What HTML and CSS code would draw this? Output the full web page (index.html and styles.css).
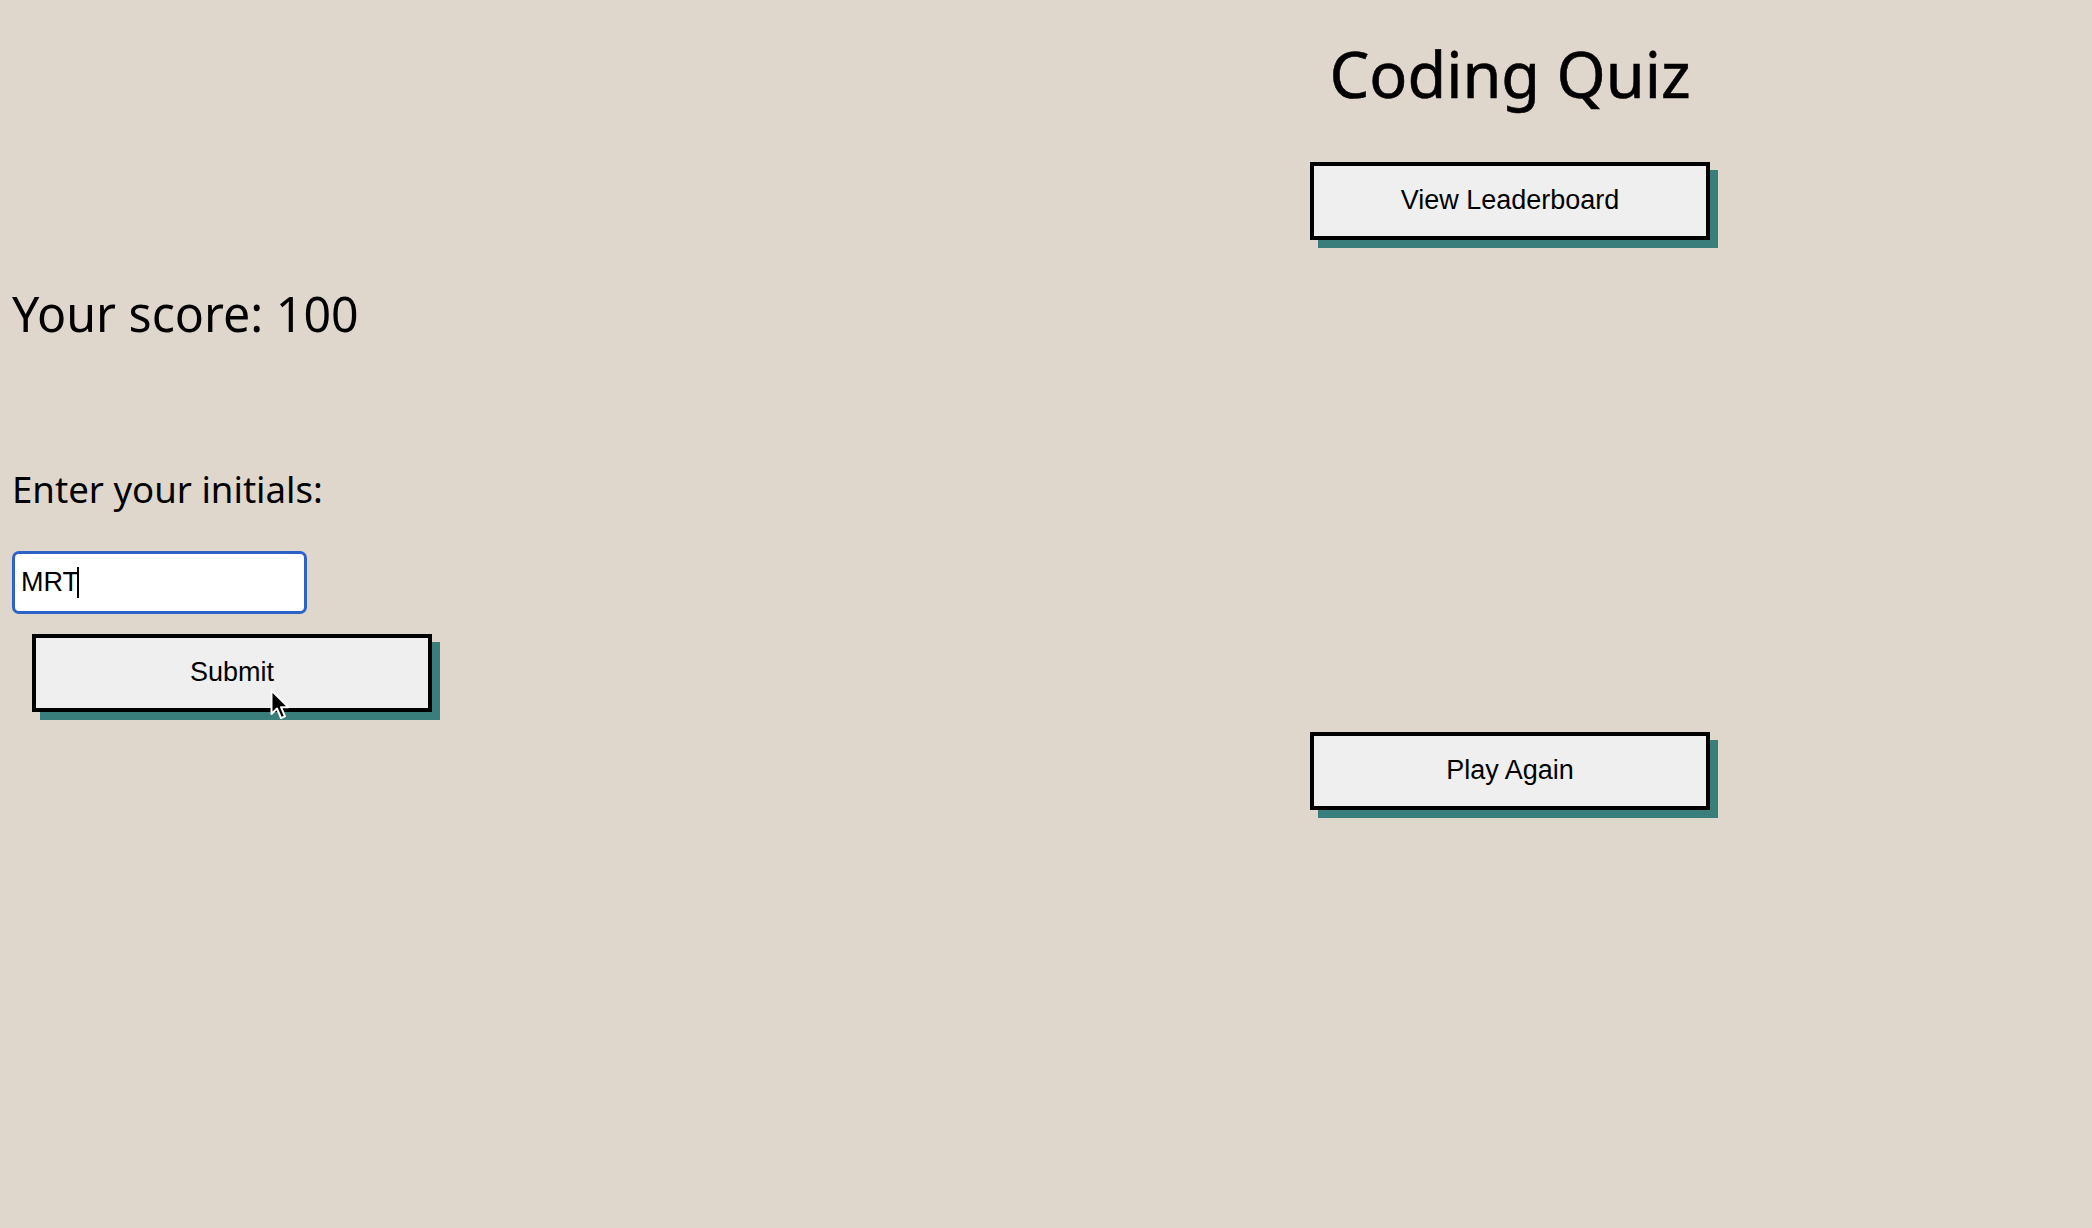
FILE: index.html
```html
<!DOCTYPE html>
<html lang="en">
<head>
<meta charset="utf-8">
<title>Coding Quiz</title>
<link rel="stylesheet" href="styles.css">
</head>
<body>
<div class="page">
  <section class="left">
    <h2 class="score">Your score: 100</h2>
    <label class="label" for="initials">Enter your initials:</label>
    <div class="field">
      <input id="initials" class="input" type="text" value="MRT">
      <span class="caret"></span>
    </div>
    <div class="submit-wrap">
      <button class="btn btn-submit">Submit</button>
      <svg class="cursor" width="22" height="34" viewBox="0 0 22 34">
        <path d="M1.5 1.5 L1.5 25 L7 19.5 L11 29 L15 27.3 L11 18.2 L18.5 18.2 Z" fill="#000" stroke="#fff" stroke-width="2" stroke-linejoin="round"/>
      </svg>
    </div>
  </section>
  <section class="right">
    <h1 class="title">Coding Quiz</h1>
    <button class="btn">View Leaderboard</button>
    <button class="btn btn-play">Play Again</button>
  </section>
</div>
</body>
</html>
```
FILE: styles.css
```css
html, body {
  margin: 0;
  padding: 0;
}
body {
  background: #dfd7cc;
  font-family: "Noto Sans", "Open Sans", sans-serif;
  color: #000;
  width: 2092px;
  height: 1228px;
  overflow: hidden;
}
.page {
  display: flex;
  justify-content: space-between;
  align-items: flex-start;
}
.left {
  display: flex;
  flex-direction: column;
  align-items: flex-start;
  padding-left: 12px;
}
.score {
  font-size: 48.3px;
  font-weight: 400;
  line-height: 67px;
  margin: 280px 0 0 0;
}
.label {
  font-size: 36.6px;
  line-height: 48px;
  margin-top: 118px;
}
.field {
  position: relative;
  margin-top: 38px;
}
.input {
  display: block;
  box-sizing: border-box;
  width: 295px;
  height: 63px;
  border: 3px solid #2b63c8;
  border-radius: 7px;
  background: #fff;
  outline: none;
  padding: 0 0 0 6px;
  font-family: "Liberation Sans", Arial, sans-serif;
  font-size: 27px;
  color: #000;
  margin: 0;
}
.caret {
  position: absolute;
  left: 65px;
  top: 16px;
  width: 2px;
  height: 31px;
  background: #000;
}
.submit-wrap {
  position: relative;
  margin-top: 20px;
  margin-left: 20px;
}
.btn {
  display: block;
  box-sizing: border-box;
  width: 400px;
  height: 78px;
  border: 4px solid #000;
  background: #efefef;
  box-shadow: 8px 8px 0 #3a7e7b;
  font-family: "Liberation Sans", Arial, sans-serif;
  font-size: 27px;
  color: #000;
  padding: 0 0 2px 0;
  margin: 0;
}
.cursor {
  position: absolute;
  left: 238px;
  top: 55px;
}
.right {
  width: 400px;
  margin-right: 382px;
  display: flex;
  flex-direction: column;
  align-items: center;
}
.title {
  font-size: 63px;
  font-weight: 400;
  line-height: 91px;
  margin: 28px 0 43px 0;
  white-space: nowrap;
  -webkit-text-stroke: 0.6px #000;
}
.btn-play {
  margin-top: 492px;
}
```
